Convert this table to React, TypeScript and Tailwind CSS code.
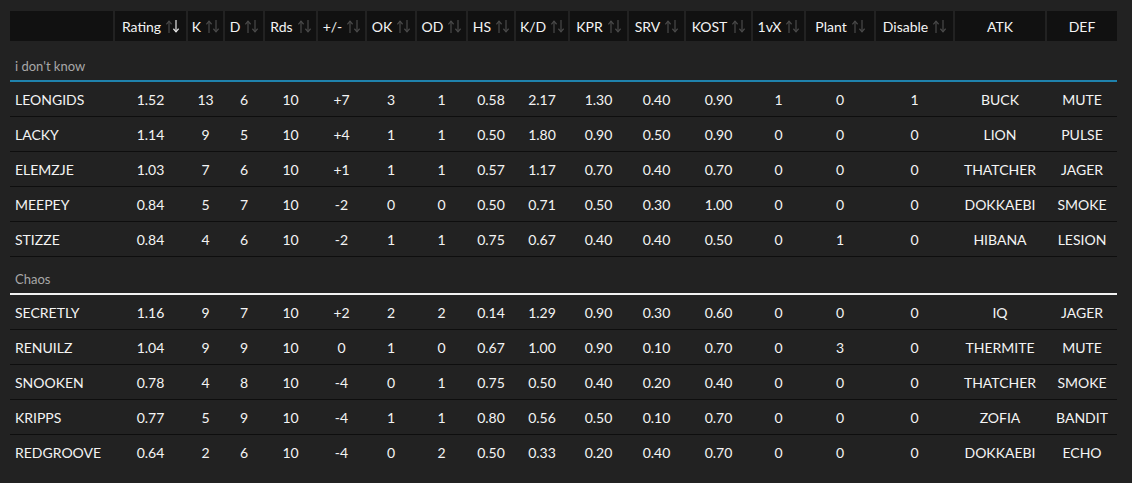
import React from "react";

const cols = "grid grid-cols-[103px_71px_35px_38px_51px_47px_48px_49px_46px_52px_57px_55px_65px_51px_68px_77px_90px_70px] gap-x-[2px]";

const headers: { label: string; sort: boolean; active?: boolean }[] = [
  { label: "", sort: false },
  { label: "Rating", sort: true, active: true },
  { label: "K", sort: true },
  { label: "D", sort: true },
  { label: "Rds", sort: true },
  { label: "+/-", sort: true },
  { label: "OK", sort: true },
  { label: "OD", sort: true },
  { label: "HS", sort: true },
  { label: "K/D", sort: true },
  { label: "KPR", sort: true },
  { label: "SRV", sort: true },
  { label: "KOST", sort: true },
  { label: "1vX", sort: true },
  { label: "Plant", sort: true },
  { label: "Disable", sort: true },
  { label: "ATK", sort: false },
  { label: "DEF", sort: false },
];

const groups: { name: string; line: string; rows: string[][] }[] = [
  {
    name: "i don't know",
    line: "bg-[#1f82ad]",
    rows: [
      ["LEONGIDS", "1.52", "13", "6", "10", "+7", "3", "1", "0.58", "2.17", "1.30", "0.40", "0.90", "1", "0", "1", "BUCK", "MUTE"],
      ["LACKY", "1.14", "9", "5", "10", "+4", "1", "1", "0.50", "1.80", "0.90", "0.50", "0.90", "0", "0", "0", "LION", "PULSE"],
      ["ELEMZJE", "1.03", "7", "6", "10", "+1", "1", "1", "0.57", "1.17", "0.70", "0.40", "0.70", "0", "0", "0", "THATCHER", "JAGER"],
      ["MEEPEY", "0.84", "5", "7", "10", "-2", "0", "0", "0.50", "0.71", "0.50", "0.30", "1.00", "0", "0", "0", "DOKKAEBI", "SMOKE"],
      ["STIZZE", "0.84", "4", "6", "10", "-2", "1", "1", "0.75", "0.67", "0.40", "0.40", "0.50", "0", "1", "0", "HIBANA", "LESION"],
    ],
  },
  {
    name: "Chaos",
    line: "bg-[#f2f2f2]",
    rows: [
      ["SECRETLY", "1.16", "9", "7", "10", "+2", "2", "2", "0.14", "1.29", "0.90", "0.30", "0.60", "0", "0", "0", "IQ", "JAGER"],
      ["RENUILZ", "1.04", "9", "9", "10", "0", "1", "0", "0.67", "1.00", "0.90", "0.10", "0.70", "0", "3", "0", "THERMITE", "MUTE"],
      ["SNOOKEN", "0.78", "4", "8", "10", "-4", "0", "1", "0.75", "0.50", "0.40", "0.20", "0.40", "0", "0", "0", "THATCHER", "SMOKE"],
      ["KRIPPS", "0.77", "5", "9", "10", "-4", "1", "1", "0.80", "0.56", "0.50", "0.10", "0.70", "0", "0", "0", "ZOFIA", "BANDIT"],
      ["REDGROOVE", "0.64", "2", "6", "10", "-4", "0", "2", "0.50", "0.33", "0.20", "0.40", "0.70", "0", "0", "0", "DOKKAEBI", "ECHO"],
    ],
  },
];

function SortIcon({ active }: { active?: boolean }) {
  const up = "#4a4a4a";
  const down = active ? "#e6e6e6" : "#4a4a4a";
  return (
    <svg width="13" height="13" viewBox="0 0 13 13" className="shrink-0">
      <g fill="none" strokeWidth="1.2" strokeLinecap="square">
        <path d="M3 12.5V1.5" stroke={up} />
        <path d="M0.8 3.8L3 1.2L5.2 3.8" stroke={up} />
        <path d="M10 0.5V11.5" stroke={down} />
        <path d="M7.8 9.2L10 11.8L12.2 9.2" stroke={down} />
      </g>
    </svg>
  );
}

export default function App() {
  return (
    <div
      className="min-h-[483px] w-[1132px] bg-[#222222] pl-[10px] pt-[11px] text-[14px] text-[#f4f4f4]"
      style={{ fontFamily: "Lato, 'Liberation Sans', sans-serif" }}
    >
      <div className="w-[1107px]">
        <div className={cols}>
          {headers.map((h, i) => (
            <div
              key={i}
              className="flex h-[30px] items-center justify-center gap-[5px] bg-[#111111] text-[14px] text-[#f4f4f4]"
            >
              {h.label && <span>{h.label}</span>}
              {h.sort && <SortIcon active={h.active} />}
            </div>
          ))}
        </div>
        {groups.map((g, gi) => (
          <div key={gi}>
            <div
              className={`flex items-end pb-[4px] pl-[5px] text-[13px] text-[#a8a8a8] ${
                gi === 0 ? "h-[39px]" : "h-[36px]"
              }`}
            >
              {g.name}
            </div>
            <div className={`h-[2px] ${g.line}`} />
            {g.rows.map((r, ri) => (
              <div
                key={ri}
                className={`${cols} h-[35px] items-center ${
                  gi === groups.length - 1 && ri === g.rows.length - 1
                    ? ""
                    : "border-b border-[#0e0e0e]"
                }`}
              >
                {r.map((c, ci) => (
                  <div key={ci} className={ci === 0 ? "pl-[5px] text-left" : "text-center"}>
                    {c}
                  </div>
                ))}
              </div>
            ))}
          </div>
        ))}
      </div>
    </div>
  );
}
